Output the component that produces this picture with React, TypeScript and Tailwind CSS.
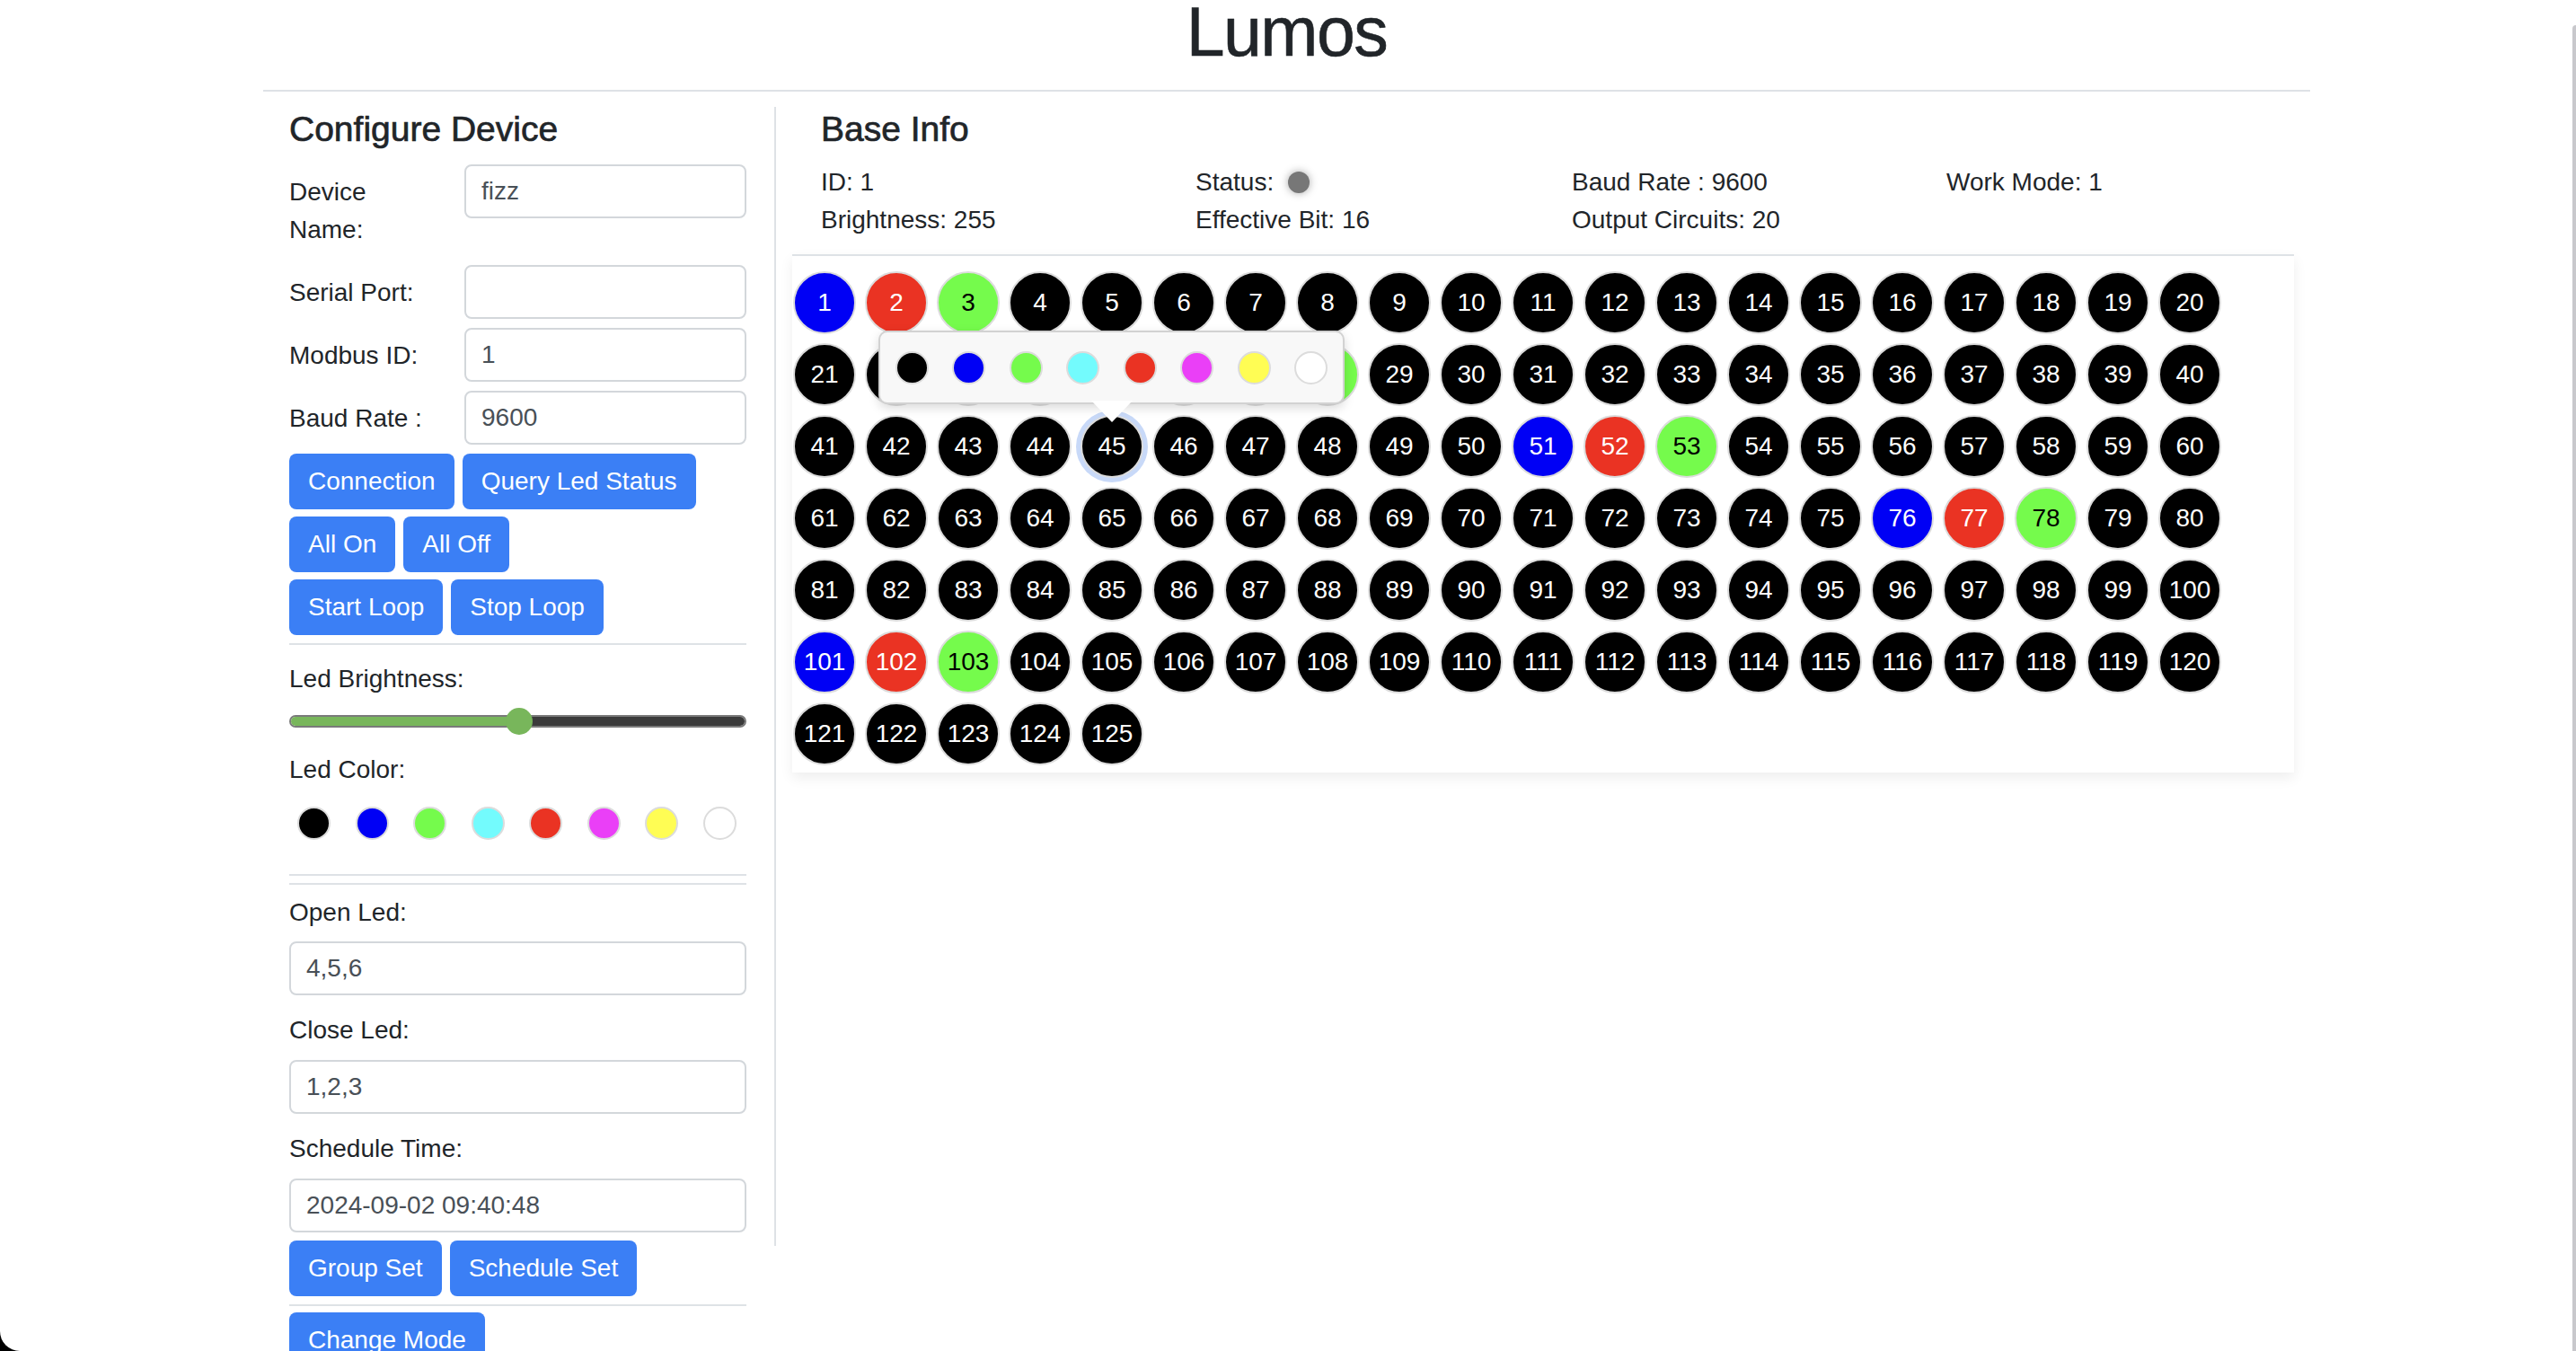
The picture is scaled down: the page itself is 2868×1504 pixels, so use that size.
import React from "react";

const BLUE = "#0000f5";
const RED = "#ea3323";
const GREEN = "#75fb4c";

const palette = ["#000000", BLUE, GREEN, "#73fbfd", RED, "#ea3ff7", "#fffd54", "#ffffff"];

function ledColor(n: number) {
  const k = (n - 1) % 25;
  if (k === 0) return { bg: BLUE, fg: "#ffffff" };
  if (k === 1) return { bg: RED, fg: "#ffffff" };
  if (k === 2) return { bg: GREEN, fg: "#000000" };
  return { bg: "#000000", fg: "#ffffff" };
}

function FormRow({ label, value }: { label: string; value: string }) {
  return (
    <div className="flex items-start mb-[8px]">
      <label className="w-[165px] mr-[30px] py-[10px] leading-[42px]">{label}</label>
      <TextInput value={value} className="flex-1" />
    </div>
  );
}

function TextInput({ value, className = "" }: { value: string; className?: string }) {
  return (
    <input
      readOnly
      value={value}
      className={`h-[60px] w-full border-2 border-[#d3d7db] rounded-[8px] px-[17px] text-[28px] text-[#495057] bg-white outline-none ${className}`}
    />
  );
}

function Btn({ children }: { children: React.ReactNode }) {
  return (
    <button className="h-[62px] px-[21px] rounded-[8px] bg-[#3b7ff5] text-white text-[28px] leading-[42px]">
      {children}
    </button>
  );
}

function Dot({ color, size = 37 }: { color: string; size?: number }) {
  return (
    <span
      className="block rounded-full border-2 border-[#dcdcdc] shrink-0"
      style={{ backgroundColor: color, width: size, height: size }}
    />
  );
}

function Hr({ className = "" }: { className?: string }) {
  return <div className={`border-t-2 border-[#dee2e6] ${className}`} />;
}

export default function App() {
  const leds = Array.from({ length: 125 }, (_, i) => i + 1);

  return (
    <div
      className="w-[2868px] h-[1504px] bg-black overflow-hidden text-[#212529] text-[28px]"
      style={{ fontFamily: '"Liberation Sans", Arial, sans-serif' }}
    >
      <div className="relative w-full h-full bg-white rounded-bl-[22px] overflow-hidden">
        <div className="ml-[293px] w-[2279px]">
          <h1 className="h-[70px] leading-[70px] text-center text-[77px] font-medium tracking-[-1.5px] [-webkit-text-stroke:0.6px_#212529]">
            Lumos
          </h1>
          <Hr className="mt-[30px]" />

          <div className="flex items-start">
            {/* Configure Device */}
            <aside className="w-[569px] shrink-0 pl-[29px] pr-[31px]">
              <h5 className="mt-[20px] text-[39px] leading-[44px] font-medium [-webkit-text-stroke:0.7px_#212529]">
                Configure Device
              </h5>

              <div className="mt-[17px]">
                <FormRow label="Device Name:" value="fizz" />
                <FormRow label="Serial Port:" value="" />
                <FormRow label="Modbus ID:" value="1" />
                <FormRow label="Baud Rate :" value="9600" />
              </div>

              <div className="flex flex-col gap-[8px]">
                <div className="flex gap-[9px]">
                  <Btn>Connection</Btn>
                  <Btn>Query Led Status</Btn>
                </div>
                <div className="flex gap-[9px]">
                  <Btn>All On</Btn>
                  <Btn>All Off</Btn>
                </div>
                <div className="flex gap-[9px]">
                  <Btn>Start Loop</Btn>
                  <Btn>Stop Loop</Btn>
                </div>
              </div>

              <Hr className="mt-[9px]" />

              <div className="mt-[17px] leading-[42px]">Led Brightness:</div>
              <div className="relative mt-[11px] h-[30px] flex items-center">
                <div className="flex w-full h-[14px] rounded-full overflow-hidden border-2 border-[#7a7a7a]">
                  <div className="w-[254px] bg-[#78b65b]" />
                  <div className="flex-1 bg-[#3b3b3b]" />
                </div>
                <span className="absolute left-[241px] top-0 w-[30px] h-[30px] rounded-full bg-[#78b65b]" />
              </div>

              <div className="mt-[18px] leading-[42px]">Led Color:</div>
              <div className="mt-[20px] flex gap-[27.5px] pl-[9px]">
                {palette.map((c) => (
                  <Dot key={c} color={c} />
                ))}
              </div>

              <Hr className="mt-[38px]" />
              <Hr className="mt-[8px]" />

              <div className="mt-[10px] leading-[42px]">Open Led:</div>
              <TextInput value="4,5,6" className="mt-[11px]" />
              <div className="mt-[18px] leading-[42px]">Close Led:</div>
              <TextInput value="1,2,3" className="mt-[12px]" />
              <div className="mt-[18px] leading-[42px]">Schedule Time:</div>
              <TextInput value="2024-09-02 09:40:48" className="mt-[12px]" />

              <div className="mt-[9px] flex gap-[9px]">
                <Btn>Group Set</Btn>
                <Btn>Schedule Set</Btn>
              </div>
              <Hr className="mt-[9px]" />
              <div className="mt-[7px]">
                <Btn>Change Mode</Btn>
              </div>
            </aside>

            <div className="w-[2px] h-[1268px] mt-[17px] bg-[#dee2e6] shrink-0" />

            {/* Base Info */}
            <main className="flex-1 pl-[18px]">
              <div className="pl-[32px]">
                <h5 className="mt-[20px] text-[39px] leading-[44px] font-medium [-webkit-text-stroke:0.7px_#212529]">
                  Base Info
                </h5>
                <div className="mt-[16px] grid grid-cols-[417px_419px_417px_417px] leading-[42px]">
                  <div>ID: 1</div>
                  <div className="flex items-center">
                    Status:
                    <span className="ml-[16px] w-[24px] h-[24px] rounded-full bg-[#777777] shadow-[0_0_10px_rgba(0,0,0,0.35)]" />
                  </div>
                  <div>Baud Rate : 9600</div>
                  <div>Work Mode: 1</div>
                  <div>Brightness: 255</div>
                  <div>Effective Bit: 16</div>
                  <div>Output Circuits: 20</div>
                  <div />
                </div>
              </div>

              <div className="mt-[17px] w-[1672px] border-t-2 border-[#dee2e6] bg-white pt-[17px] pb-[8px] pl-[1px] shadow-[0_6px_14px_rgba(0,0,0,0.07)]">
                <div className="relative grid grid-cols-[repeat(20,70px)] gap-[10px]">
                  {leds.map((n) => {
                    const c = ledColor(n);
                    return (
                      <div
                        key={n}
                        className={`w-[70px] h-[70px] rounded-full border-2 border-[#dcdcdc] flex items-center justify-center text-[28px] ${
                          n === 45 ? "ring-[5px] ring-[#c8d9f8]" : ""
                        }`}
                        style={{ backgroundColor: c.bg, color: c.fg }}
                      >
                        {n}
                      </div>
                    );
                  })}

                  {/* color picker popover */}
                  <div className="absolute left-[95px] top-[66px] w-[519px] h-[82px] bg-[#f8f8f8] border-2 border-[#d2d2d2] rounded-[10px] shadow-[0_4px_12px_rgba(0,0,0,0.15)] flex items-center justify-between px-[17px]">
                    {palette.map((c) => (
                      <Dot key={c} color={c} />
                    ))}
                    <span className="absolute left-1/2 -translate-x-1/2 top-[calc(100%-2px)] w-0 h-0 border-x-[23px] border-x-transparent border-t-[24px] border-t-white" />
                  </div>
                </div>
              </div>
            </main>
          </div>
        </div>

        <div className="absolute right-0 top-[28px] bottom-0 w-[4px] rounded-tl-[4px] bg-[#c8c8cc]" />
      </div>
    </div>
  );
}
